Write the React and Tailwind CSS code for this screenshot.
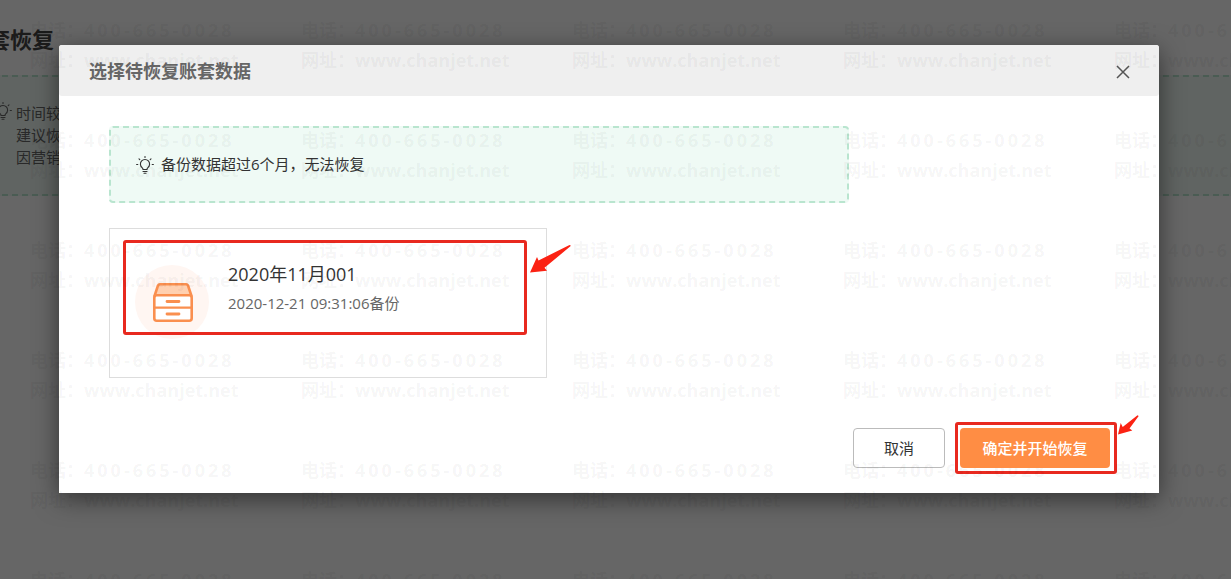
import React from 'react';

const watermarkCells = Array.from({ length: 30 }, (_, i) => i);

const BulbIcon = ({ className }) => (
    <svg className={className} width="18" height="18" viewBox="0 0 18 18" fill="none" stroke="currentColor" strokeWidth="1.1" strokeLinecap="round" aria-hidden="true">
        <path d="M7 13.5c0-1-.4-1.500-.9-1.900a4.600 4.600 0 1 1 5.800 0c-.5.4-.9.9-.9 1.900z" />
        <path d="M7 15.500h4M8 17.200h2" />
        <path d="M9 .5v1M3 2.800l.8.8M15 2.800l-.8.8M.6 8.500h1.200M16.200 8.500h1.200" />
    </svg>
);

const DrawerIcon = () => (
    <svg className="shrink-0" width="74" height="74" viewBox="0 0 74 74" fill="none" aria-hidden="true">
        <circle cx="37" cy="37" r="37" fill="#fff6f2" />
        <path d="M19.500 31l3.500-10.500q.6-1.300 2-1.300h26q1.400 0 2 1.300l3.500 10.500z" fill="#ffd0b0" />
        <rect x="19.300" y="30.300" width="37.400" height="25.400" rx="2.500" fill="#fff" />
        <g stroke="#fa8f4f" strokeWidth="2.600" strokeLinecap="round" strokeLinejoin="round">
            <path d="M19.500 31l3.500-10.500q.6-1.300 2-1.300h26q1.400 0 2 1.300l3.500 10.500" />
            <rect x="19.300" y="30.300" width="37.400" height="25.400" rx="2.500" />
            <path d="M19.300 42.700h37.400" strokeWidth="2.200" />
            <path d="M32 36.500h12M32 49h12" strokeWidth="2.800" />
        </g>
    </svg>
);

const Watermark = () => (
    <div aria-hidden="true" className="pointer-events-none absolute inset-0 overflow-hidden select-none">
        <div className="grid w-max grid-cols-[repeat(5,271px)] pt-[15px] pl-[30px] font-bold text-black/5">
            {watermarkCells.map((cell) => (
                <div key={cell} className="h-[110px] text-lg leading-[30px] whitespace-nowrap">
                    <p>
                        电话：<span className="tracking-[3px]">400-665-0028</span>
                    </p>
                    <p>网址：www.chanjet.net</p>
                </div>
            ))}
        </div>
    </div>
);

const PageBehind = () => (
    <div className="pt-[23px] text-[#444]">
        <h1 className="-ml-3 text-[22px] leading-8 font-bold">套恢复</h1>
        <div className="mt-5 -mx-2 flex h-[121px] border-2 border-dashed border-[#b9e5cf] bg-[#effaf5] pt-[25px] text-[15px] leading-[22px] text-[#666]">
            <BulbIcon className="mr-1 shrink-0" />
            <p>
                时间较
                <br />
                建议恢
                <br />
                因营销
            </p>
        </div>
    </div>
);

const Dialog = () => (
    <section
        role="dialog"
        aria-labelledby="dialog-title"
        className="rounded-t-[3px] bg-white shadow-[0_6px_24px_rgba(0,0,0,0.5)]"
    >
        <header className="flex h-[51px] items-center justify-between rounded-[3px] bg-[#efefef] pr-7 pl-[30px]">
            <h2 id="dialog-title" className="text-lg font-bold text-[#666]">选择待恢复账套数据</h2>
            <button type="button" aria-label="关闭" className="mt-0.5 flex size-4 items-center justify-center text-[#555]">
                <svg width="14" height="14" viewBox="0 0 14 14" fill="none" stroke="currentColor" strokeWidth="1.500">
                    <path d="M1 1l12 12M13 1L1 13" />
                </svg>
            </button>
        </header>

        <div className="px-[50px] pt-[30px]">
            <div className="flex h-[77px] max-w-[740px] items-center gap-[7px] rounded-sm border-2 border-dashed border-[#b9e5cf] bg-[#effaf5] px-[25px] text-[15px] text-[#333]">
                <BulbIcon className="shrink-0" />
                <p>备份数据超过6个月，无法恢复</p>
            </div>

            <div className="relative mt-[25px] flex h-[150px] max-w-[438px] gap-[19px] border border-[#ddd] px-[25px] pt-9">
                <DrawerIcon />
                <div className="-mt-[5px]">
                    <h3 className="text-lg leading-7 text-[#333]">2020年11月001</h3>
                    <p className="text-[15px] leading-[30px] text-[#666]">2020-12-21 09:31:06备份</p>
                </div>
                <div className="absolute inset-x-[13px] top-[11px] mr-1.5 h-[95px] rounded-[3px] border-3 border-[#e8291f]" />
                <svg className="absolute top-4 left-[420px]" width="41" height="28" viewBox="0 0 41 28" aria-hidden="true">
                    <path d="M0 27.500L7 12l1.500 3.500L39.500 0l1.500.8L14.500 22.800l2.500 3z" fill="#fb2213" />
                </svg>
            </div>
        </div>

        <footer className="mt-11 flex items-center justify-end gap-2.5 pr-[42px] pb-[19px] text-[15px]">
            <button type="button" className="h-10 w-[92px] rounded-sm border border-[#bbb] text-[#333]">取消</button>
            <div className="relative flex h-[52px] w-[162px] items-center rounded-[3px] border-3 border-[#e8291f] pl-0.5">
                <button type="button" className="relative z-10 h-10 w-[150px] rounded-sm bg-[#ff8d44] font-medium text-white">确定并开始恢复</button>
                <svg className="absolute -top-2.5 left-[160px]" width="21" height="20" viewBox="0 0 21 20" aria-hidden="true">
                    <path d="M0 19.500L2.700 8l2 4L19.500.3l1.200.8L11.500 13.500l2.800 2z" fill="#fb2213" />
                </svg>
            </div>
        </footer>
    </section>
);

const App = () => (
    <main className="relative min-h-screen overflow-hidden bg-white font-['Open_Sans','Noto_Sans_CJK_SC',sans-serif]">
        <PageBehind />
        <div className="absolute inset-0 bg-black/60 pt-[45px] pr-[72px] pl-[59px]">
            <Dialog />
        </div>
        <Watermark />
    </main>
);

export default App;
